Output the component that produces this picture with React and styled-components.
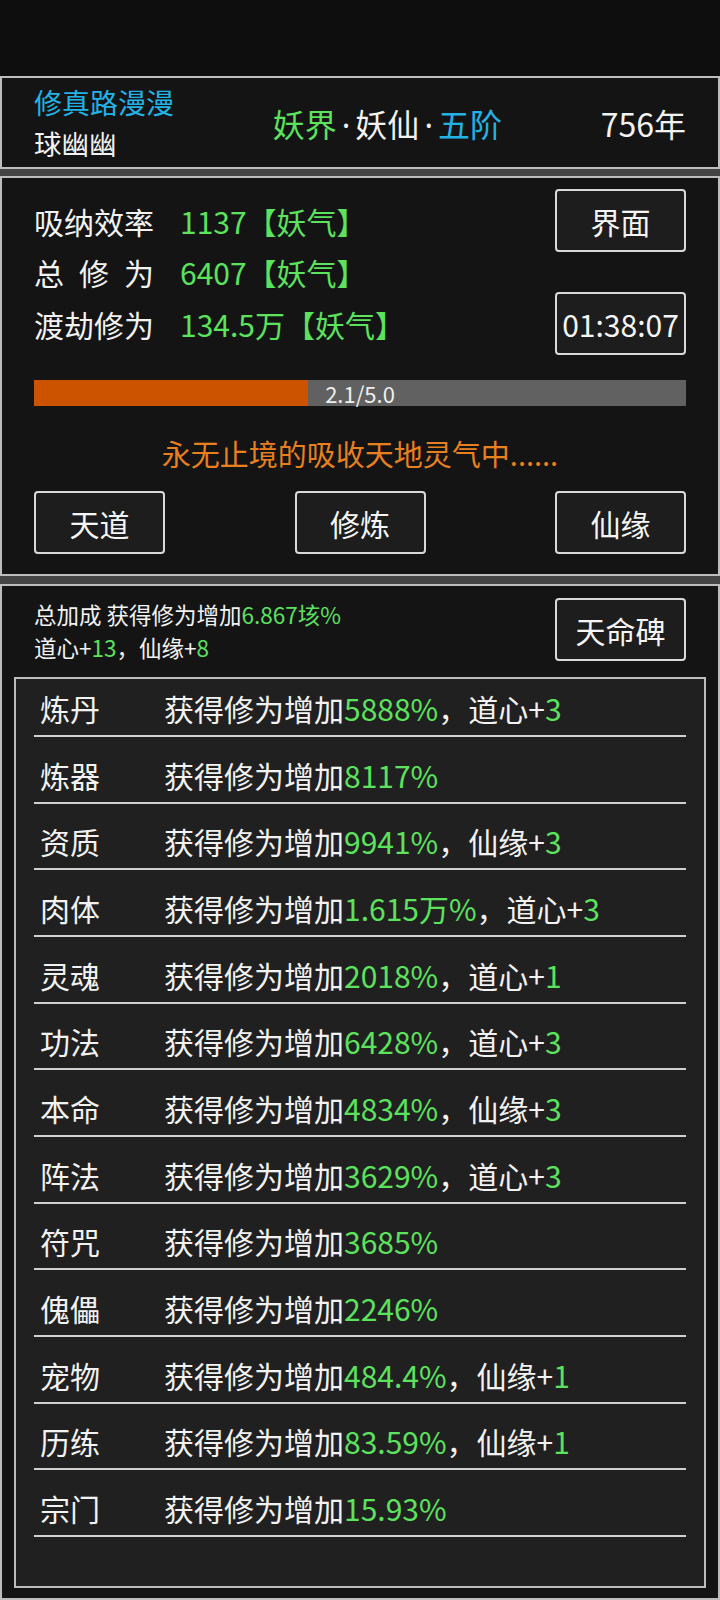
import React from "react";
import styled, { createGlobalStyle } from "styled-components";

const GlobalStyle = createGlobalStyle`
  html, body {
    margin: 0;
    padding: 0;
    background: #141414;
  }
  body {
    font-family: "Noto Sans CJK SC", "Noto Sans", sans-serif;
    color: #f2f2f2;
  }
  * {
    box-sizing: border-box;
  }
`;

const bonuses = [
  { name: "炼丹", value: "5888%", extra: ["道心", "3"] },
  { name: "炼器", value: "8117%" },
  { name: "资质", value: "9941%", extra: ["仙缘", "3"] },
  { name: "肉体", value: "1.615万%", extra: ["道心", "3"] },
  { name: "灵魂", value: "2018%", extra: ["道心", "1"] },
  { name: "功法", value: "6428%", extra: ["道心", "3"] },
  { name: "本命", value: "4834%", extra: ["仙缘", "3"] },
  { name: "阵法", value: "3629%", extra: ["道心", "3"] },
  { name: "符咒", value: "3685%" },
  { name: "傀儡", value: "2246%" },
  { name: "宠物", value: "484.4%", extra: ["仙缘", "1"] },
  { name: "历练", value: "83.59%", extra: ["仙缘", "1"] },
  { name: "宗门", value: "15.93%" },
];

const stats = [
  { label: "吸纳效率", value: "1137【妖气】" },
  { label: "总 修 为", value: "6407【妖气】" },
  { label: "渡劫修为", value: "134.5万【妖气】" },
];

export default function App() {
  const progress = 2.1 / 5.0;

  return (
    <Page>
      <GlobalStyle />
      <StatusBar />

      <HeaderPanel>
        <Identity>
          <SectName>修真路漫漫</SectName>
          <PlayerName>球幽幽</PlayerName>
        </Identity>
        <Realm>
          <Tone $c="green">妖界</Tone>
          <Dot>·</Dot>妖仙<Dot>·</Dot>
          <Tone $c="blue">五阶</Tone>
        </Realm>
        <Age>756年</Age>
      </HeaderPanel>

      <CultivatePanel>
        <StatGrid>
          {stats.map((s, i) => (
            <React.Fragment key={s.label}>
              <StatLabel style={{ gridRow: i + 1 }}>{s.label}</StatLabel>
              <StatValue style={{ gridRow: i + 1 }}>{s.value}</StatValue>
            </React.Fragment>
          ))}
          <GridButton $row={1}>界面</GridButton>
          <GridButton $row={3}>01:38:07</GridButton>
        </StatGrid>

        <Progress>
          <ProgressFill style={{ width: `${progress * 100}%` }} />
          <ProgressText>2.1/5.0</ProgressText>
        </Progress>

        <Status>永无止境的吸收天地灵气中......</Status>

        <ActionRow>
          <Button>天道</Button>
          <Button>修炼</Button>
          <Button>仙缘</Button>
        </ActionRow>
      </CultivatePanel>

      <BonusPanel>
        <BonusHeader>
          <Summary>
            <div>
              总加成 获得修为增加<Tone $c="green">6.867垓%</Tone>
            </div>
            <div>
              道心+<Tone $c="green">13</Tone>，仙缘+<Tone $c="green">8</Tone>
            </div>
          </Summary>
          <Button>天命碑</Button>
        </BonusHeader>

        <BonusList>
          {bonuses.map((b) => (
            <BonusRow key={b.name}>
              <BonusName>{b.name}</BonusName>
              <span>
                获得修为增加<Tone $c="green">{b.value}</Tone>
                {b.extra && (
                  <>
                    ，{b.extra[0]}+<Tone $c="green">{b.extra[1]}</Tone>
                  </>
                )}
              </span>
            </BonusRow>
          ))}
        </BonusList>
      </BonusPanel>
    </Page>
  );
}

const Page = styled.div`
  width: 720px;
  height: 1600px;
  background: #444444;
  display: flex;
  flex-direction: column;
  overflow: hidden;
`;

const StatusBar = styled.div`
  height: 76px;
  background: #0e0e0e;
  flex-shrink: 0;
`;

const Panel = styled.section`
  background: #141414;
  border: 2px solid #bdbdbd;
  flex-shrink: 0;
`;

const HeaderPanel = styled(Panel)`
  height: 93px;
  display: flex;
  align-items: center;
  justify-content: space-between;
  padding: 0 32px;
`;

const Identity = styled.div`
  display: flex;
  flex-direction: column;
  line-height: 41px;
`;

const SectName = styled.div`
  font-size: 28px;
  color: #22b2e6;
`;

const PlayerName = styled.div`
  font-size: 27.5px;
  color: #f2f2f2;
`;

const Realm = styled.div`
  font-size: 32px;
  color: #f2f2f2;
  white-space: nowrap;
`;

const Dot = styled.span`
  font-family: "Noto Sans", sans-serif;
  margin: 0 5px;
`;

const Age = styled.div`
  font-size: 32px;
`;

const Tone = styled.span`
  color: ${(p) => (p.$c === "blue" ? "#22b2e6" : "#5ce25c")};
`;

const CultivatePanel = styled(Panel)`
  height: 400px;
  margin-top: 7px;
  padding: 11px 32px 0;
  display: flex;
  flex-direction: column;
`;

const StatGrid = styled.div`
  display: grid;
  grid-template-columns: 146px 1fr 131px;
  grid-template-rows: 63px 40px 63px;
  align-items: center;
  font-size: 30px;
`;

const StatLabel = styled.div`
  grid-column: 1;
  width: 120px;
  text-align: justify;
  text-align-last: justify;
  white-space: nowrap;
`;

const StatValue = styled.div`
  grid-column: 2;
  color: #5ce25c;
  white-space: nowrap;
`;

const Button = styled.button`
  width: 131px;
  height: 63px;
  background: #1d1d1d;
  border: 2px solid #d9d9d9;
  border-radius: 4px;
  color: #f5f5f5;
  font: inherit;
  font-size: 30px;
  padding: 0;
  display: flex;
  align-items: center;
  justify-content: center;
  cursor: pointer;
`;

const GridButton = styled(Button)`
  grid-column: 3;
  grid-row: ${(p) => p.$row};
`;

const Progress = styled.div`
  position: relative;
  margin-top: 25px;
  height: 26px;
  background: #616161;
  display: flex;
  align-items: center;
  justify-content: center;
`;

const ProgressFill = styled.div`
  position: absolute;
  left: 0;
  top: 0;
  bottom: 0;
  background: #cc5400;
`;

const ProgressText = styled.span`
  position: relative;
  font-size: 22px;
  line-height: 26px;
  color: #eeeeee;
`;

const Status = styled.div`
  margin-top: 27px;
  line-height: 40px;
  font-size: 29px;
  color: #e8801f;
  text-align: center;
`;

const ActionRow = styled.div`
  margin-top: 18px;
  display: flex;
  justify-content: space-between;
`;

const BonusPanel = styled(Panel)`
  margin-top: 8px;
  flex: 1;
  padding: 12px 12px 10px;
  display: flex;
  flex-direction: column;
`;

const BonusHeader = styled.div`
  display: flex;
  justify-content: space-between;
  align-items: flex-start;
  padding: 0 20px;
`;

const Summary = styled.div`
  font-size: 22.5px;
  line-height: 33px;
`;

const BonusList = styled.div`
  margin-top: 13px;
  flex: 1;
  background: #202020;
  border: 2px solid #bdbdbd;
  padding: 0 18px;
`;

const BonusRow = styled.div`
  display: flex;
  align-items: center;
  font-size: 30px;
  line-height: 40px;
  padding: 17.5px 0 7.17px 6px;
  border-bottom: 2px solid #d0d0d0;
  white-space: nowrap;

  &:first-child {
    padding-top: 9px;
  }
`;

const BonusName = styled.span`
  width: 124px;
  flex-shrink: 0;
`;
